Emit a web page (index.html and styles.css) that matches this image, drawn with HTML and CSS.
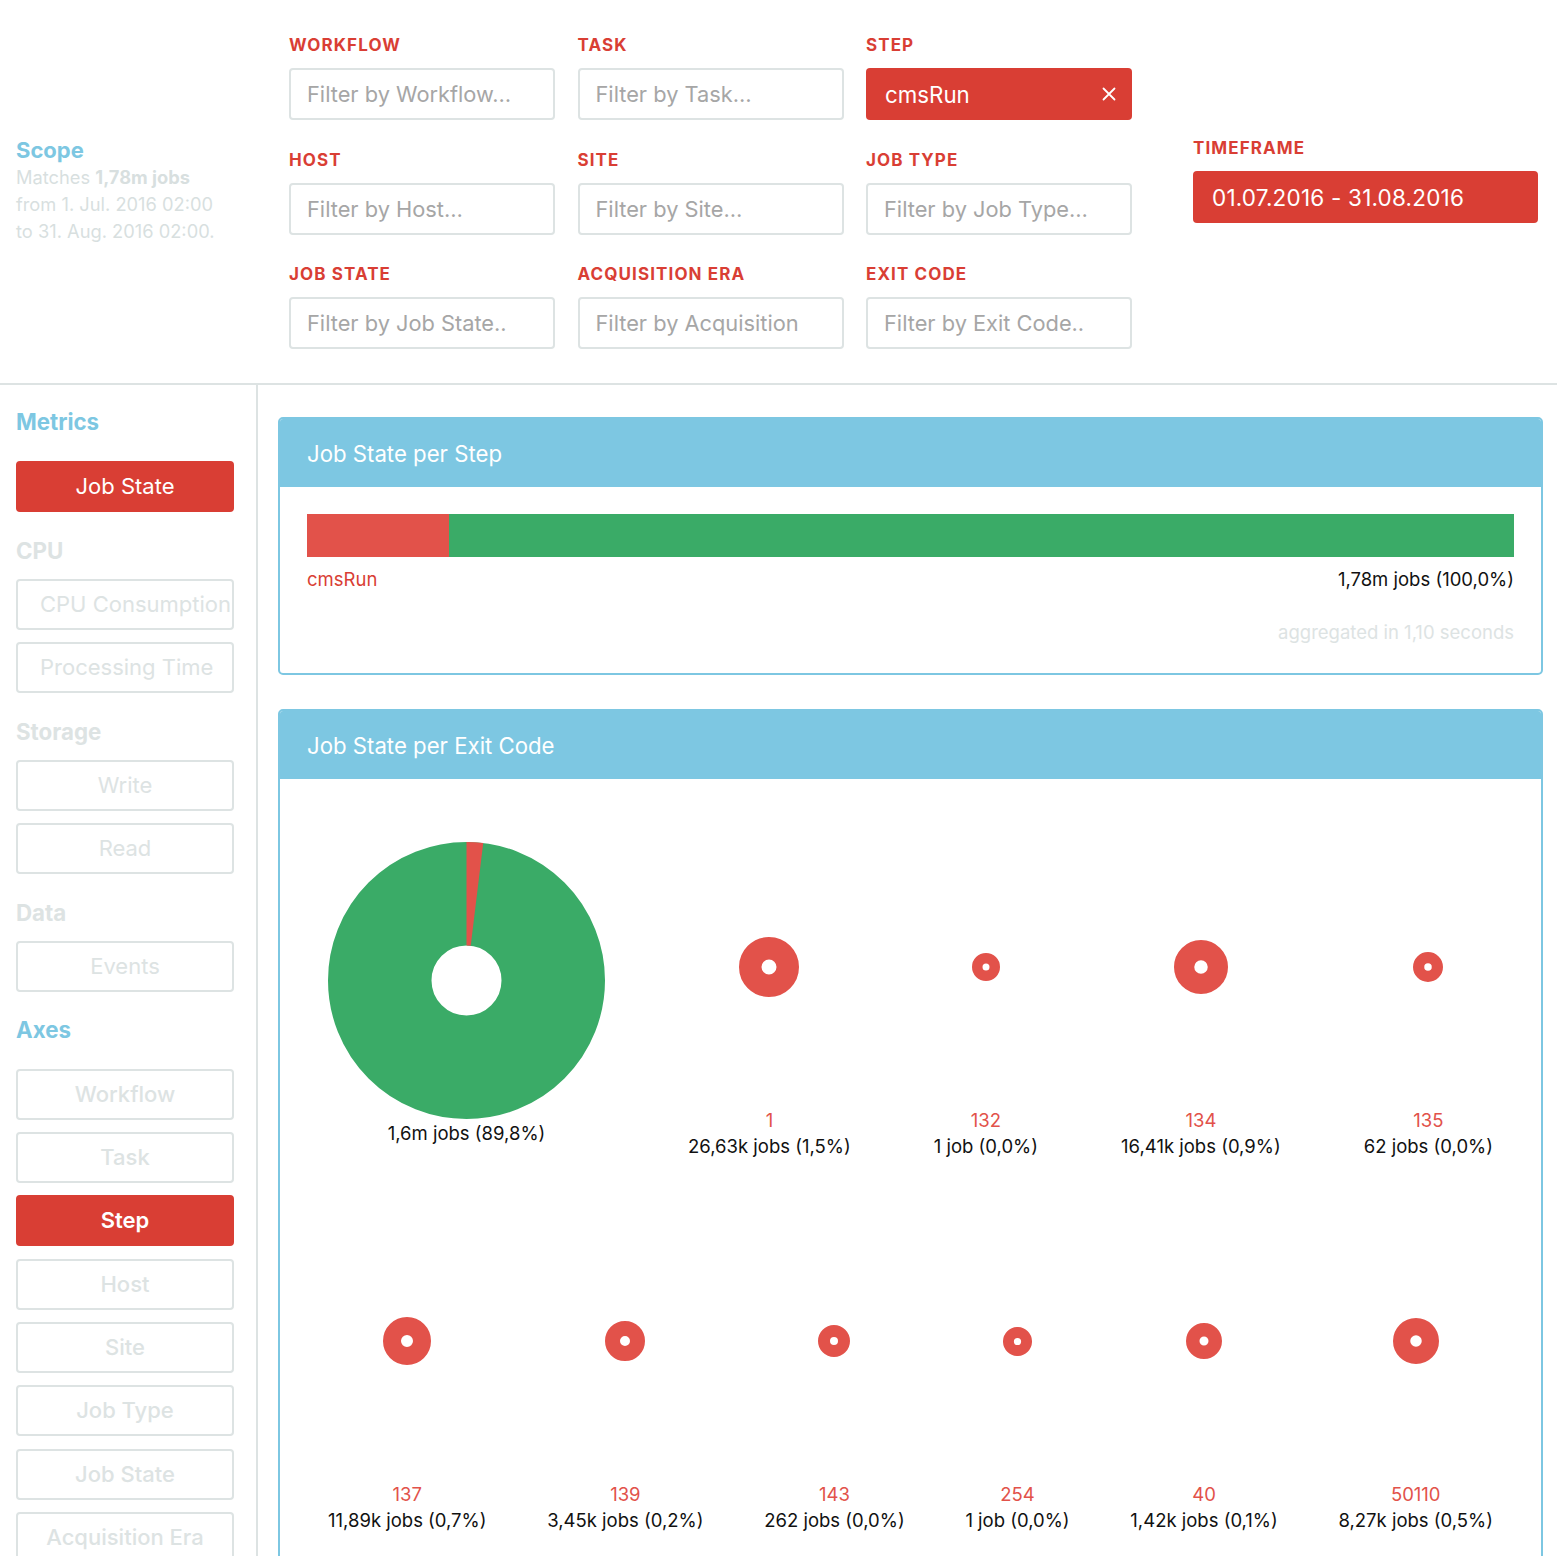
FILE: index.html
```html
<!DOCTYPE html>
<html lang="en">
<head>
<meta charset="utf-8">
<title>Job State</title>
<link rel="stylesheet" href="styles.css">
</head>
<body>
<header class="top">
  <div class="scope">
    <div class="scope-title">Scope</div>
    <div class="scope-text">Matches <b>1,78m jobs</b><br>from 1. Jul. 2016 02:00<br>to 31. Aug. 2016 02:00.</div>
  </div>
  <div class="filters">
    <div class="filter"><div class="flabel">WORKFLOW</div><input class="finput" placeholder="Filter by Workflow…"></div>
    <div class="filter"><div class="flabel">TASK</div><input class="finput" placeholder="Filter by Task…"></div>
    <div class="filter"><div class="flabel">STEP</div>
      <div class="fselected"><span>cmsRun</span>
        <svg class="x-icon" width="14" height="14" viewBox="0 0 14 14"><path d="M1.5 1.5L12.5 12.5M12.5 1.5L1.5 12.5" stroke="#fff" stroke-width="1.8" stroke-linecap="round"/></svg>
      </div>
    </div>
    <div class="filter"><div class="flabel">HOST</div><input class="finput" placeholder="Filter by Host…"></div>
    <div class="filter"><div class="flabel">SITE</div><input class="finput" placeholder="Filter by Site…"></div>
    <div class="filter"><div class="flabel">JOB TYPE</div><input class="finput" placeholder="Filter by Job Type…"></div>
    <div class="filter"><div class="flabel">JOB STATE</div><input class="finput" placeholder="Filter by Job State.."></div>
    <div class="filter"><div class="flabel">ACQUISITION ERA</div><input class="finput" placeholder="Filter by Acquisition Era…"></div>
    <div class="filter"><div class="flabel">EXIT CODE</div><input class="finput" placeholder="Filter by Exit Code.."></div>
  </div>
  <div class="timeframe">
    <div class="flabel">TIMEFRAME</div>
    <div class="tf-box">01.07.2016 - 31.08.2016</div>
  </div>
</header>

<div class="layout">
  <aside class="sidebar">
    <div class="sec-title">Metrics</div>
    <div class="btn active">Job State</div>
    <div class="grp-title">CPU</div>
    <div class="btn">CPU Consumption</div>
    <div class="btn">Processing Time</div>
    <div class="grp-title">Storage</div>
    <div class="btn">Write</div>
    <div class="btn">Read</div>
    <div class="grp-title">Data</div>
    <div class="btn">Events</div>
    <div class="sec-title">Axes</div>
    <div class="btn axis">Workflow</div>
    <div class="btn axis">Task</div>
    <div class="btn axis active">Step</div>
    <div class="btn axis">Host</div>
    <div class="btn axis">Site</div>
    <div class="btn axis">Job Type</div>
    <div class="btn axis">Job State</div>
    <div class="btn axis">Acquisition Era</div>
  </aside>

  <main class="main">
    <section class="panel">
      <div class="panel-head">Job State per Step</div>
      <div class="panel-body">
        <div class="bar">
          <div class="bar-red" style="width:142px"></div>
          <div class="bar-green"></div>
        </div>
        <div class="bar-labels"><span class="bar-name">cmsRun</span><span class="bar-count">1,78m jobs (100,0%)</span></div>
        <div class="agg">aggregated in 1,10 seconds</div>
      </div>
    </section>

    <section class="panel panel-2">
      <div class="panel-head">Job State per Exit Code</div>
      <div class="panel-body charts">
        <div class="chart-row">
          <div class="item">
            <div class="chart pie-chart">
              <svg width="277" height="277" viewBox="0 0 277 277">
                <circle cx="138.5" cy="138.5" r="86.75" fill="none" stroke="#3aab67" stroke-width="103.5"/>
                <circle cx="138.5" cy="138.5" r="86.75" fill="none" stroke="#e2524a" stroke-width="103.5" stroke-dasharray="10.6 600" transform="rotate(-90 138.5 138.5)"/>
              </svg>
            </div>
            <div class="count">1,6m jobs (89,8%)</div>
          </div>
          <div class="item">
            <div class="chart"><svg width="60" height="60" viewBox="0 0 60 60"><circle cx="30" cy="30" r="18.75" fill="none" stroke="#e2524a" stroke-width="22.5"/></svg></div>
            <div class="code">1</div><div class="count">26,63k jobs (1,5%)</div>
          </div>
          <div class="item">
            <div class="chart"><svg width="28" height="28" viewBox="0 0 28 28"><circle cx="14" cy="14" r="8.75" fill="none" stroke="#e2524a" stroke-width="10.5"/></svg></div>
            <div class="code">132</div><div class="count">1 job (0,0%)</div>
          </div>
          <div class="item">
            <div class="chart"><svg width="54" height="54" viewBox="0 0 54 54"><circle cx="27" cy="27" r="16.875" fill="none" stroke="#e2524a" stroke-width="20.25"/></svg></div>
            <div class="code">134</div><div class="count">16,41k jobs (0,9%)</div>
          </div>
          <div class="item">
            <div class="chart"><svg width="30" height="30" viewBox="0 0 30 30"><circle cx="15" cy="15" r="9.375" fill="none" stroke="#e2524a" stroke-width="11.25"/></svg></div>
            <div class="code">135</div><div class="count">62 jobs (0,0%)</div>
          </div>
        </div>
        <div class="chart-row">
          <div class="item">
            <div class="chart"><svg width="48" height="48" viewBox="0 0 48 48"><circle cx="24" cy="24" r="15" fill="none" stroke="#e2524a" stroke-width="18"/></svg></div>
            <div class="code">137</div><div class="count">11,89k jobs (0,7%)</div>
          </div>
          <div class="item">
            <div class="chart"><svg width="40" height="40" viewBox="0 0 40 40"><circle cx="20" cy="20" r="12.5" fill="none" stroke="#e2524a" stroke-width="15"/></svg></div>
            <div class="code">139</div><div class="count">3,45k jobs (0,2%)</div>
          </div>
          <div class="item">
            <div class="chart"><svg width="32" height="32" viewBox="0 0 32 32"><circle cx="16" cy="16" r="10" fill="none" stroke="#e2524a" stroke-width="12"/></svg></div>
            <div class="code">143</div><div class="count">262 jobs (0,0%)</div>
          </div>
          <div class="item">
            <div class="chart"><svg width="29" height="29" viewBox="0 0 29 29"><circle cx="14.5" cy="14.5" r="9.06" fill="none" stroke="#e2524a" stroke-width="10.9"/></svg></div>
            <div class="code">254</div><div class="count">1 job (0,0%)</div>
          </div>
          <div class="item">
            <div class="chart"><svg width="36" height="36" viewBox="0 0 36 36"><circle cx="18" cy="18" r="11.25" fill="none" stroke="#e2524a" stroke-width="13.5"/></svg></div>
            <div class="code">40</div><div class="count">1,42k jobs (0,1%)</div>
          </div>
          <div class="item">
            <div class="chart"><svg width="46" height="46" viewBox="0 0 46 46"><circle cx="23" cy="23" r="14.375" fill="none" stroke="#e2524a" stroke-width="17.25"/></svg></div>
            <div class="code">50110</div><div class="count">8,27k jobs (0,5%)</div>
          </div>
        </div>
      </div>
    </section>
  </main>
</div>
</body>
</html>
```

FILE: styles.css
```css
html, body {
  margin: 0;
  padding: 0;
  overflow: hidden;
  height: 1556px;
}
body {
  font-family: Inter, "Noto Sans", sans-serif;
  color: #111;
  background: #fff;
}

/* ---------- top filter bar ---------- */
.top {
  display: flex;
  align-items: flex-start;
  height: 385px;
  box-sizing: border-box;
  border-bottom: 2px solid #dde3e3;
  padding-top: 35px;
}
.scope {
  width: 289px;
  box-sizing: border-box;
  padding-left: 16px;
  margin-top: 102px;
  flex: none;
}
.scope-title {
  color: #7dc7e2;
  font-weight: 700;
  font-size: 22px;
  line-height: 26px;
}
.scope-text {
  color: #d8dfdf;
  font-size: 18.3px;
  line-height: 27px;
  margin-top: 1px;
  white-space: nowrap;
}
.scope-text b { font-weight: 700; }

.filters {
  display: grid;
  grid-template-columns: repeat(3, 266px);
  column-gap: 22.5px;
  row-gap: 29.5px;
  flex: none;
}
.flabel {
  color: #d93e34;
  font-weight: 700;
  font-size: 17px;
  letter-spacing: 1.1px;
  line-height: 20px;
  margin-bottom: 13px;
}
.finput {
  display: block;
  width: 100%;
  height: 52px;
  box-sizing: border-box;
  border: 2px solid #dde3e3;
  border-radius: 4px;
  padding: 0 43px 0 16px;
  font-family: inherit;
  font-size: 21.8px;
  color: #333;
  background: #fff;
  outline: none;
}
.finput::placeholder { color: #a6a6a6; opacity: 1; }
.fselected {
  display: flex;
  align-items: center;
  justify-content: space-between;
  height: 52px;
  box-sizing: border-box;
  background: #d93e34;
  border-radius: 4px;
  padding: 0 16px 0 19px;
  color: #fff;
  font-size: 22.3px;
}
.x-icon { display: block; }

.timeframe {
  margin-left: 61px;
  width: 345px;
  margin-top: 103px;
  flex: none;
}
.tf-box {
  height: 52px;
  box-sizing: border-box;
  background: #d93e34;
  border-radius: 4px;
  color: #fff;
  font-size: 22.5px;
  letter-spacing: 0.2px;
  display: flex;
  align-items: center;
  padding-left: 19px;
}

/* ---------- layout ---------- */
.layout {
  display: flex;
  align-items: stretch;
  height: 1171px;
}
.sidebar {
  flex: none;
  width: 258px;
  box-sizing: border-box;
  border-right: 2px solid #dde3e3;
  padding: 25px 0 0 16px;
  display: flex;
  flex-direction: column;
  align-items: flex-start;
}
.sec-title {
  color: #7dc7e2;
  font-weight: 700;
  font-size: 22.3px;
  line-height: 24px;
  margin: 14px 0 26.5px;
}
.sec-title:first-child { margin-top: 0; margin-bottom: 27px; }
.grp-title {
  color: #dde3e3;
  font-weight: 700;
  font-size: 22.3px;
  line-height: 24px;
  margin: 14.5px 0 16px;
}
.btn {
  flex: none;
  width: 218px;
  height: 51px;
  box-sizing: border-box;
  border: 2px solid #dde3e3;
  border-radius: 4px;
  color: #dde3e3;
  font-size: 22px;
  line-height: 47px;
  text-align: center;
  padding: 0 22px;
  margin-bottom: 12.3px;
  white-space: nowrap;
  overflow: hidden;
}
.btn.axis { font-weight: 500; }
.btn.active {
  background: #d93e34;
  border-color: #d93e34;
  color: #fff;
}
.btn.axis.active { font-weight: 600; }

.main {
  flex: 1;
  padding: 32px 14px 0 20px;
  min-width: 0;
}

/* ---------- panels ---------- */
.panel {
  border: 2px solid #7dc7e2;
  border-radius: 5px;
  overflow: hidden;
}
.panel-2 {
  margin-top: 34px;
}
.panel-head {
  background: #7dc7e2;
  color: #fff;
  font-size: 22.2px;
  height: 68px;
  display: flex;
  align-items: center;
  padding-left: 27px;
}
.panel-body {
  padding: 27px 27px 30px;
}
.bar {
  display: flex;
  height: 43px;
}
.bar-red { background: #e2524a; }
.bar-green { background: #3aab67; flex: 1; }
.bar-labels {
  display: flex;
  justify-content: space-between;
  font-size: 18.5px;
  line-height: 22px;
  margin-top: 11px;
}
.bar-name { color: #d93e34; }
.bar-count { color: #111; }
.agg {
  text-align: right;
  color: #dde3e3;
  font-size: 18.5px;
  line-height: 22px;
  margin-top: 31px;
}

.charts {
  padding: 48px 27px 60px;
}
.chart-row {
  display: flex;
  justify-content: space-between;
  align-items: center;
}
.chart-row + .chart-row { margin-top: 42px; }
.item {
  padding: 0 21px;
  display: flex;
  flex-direction: column;
  align-items: center;
  text-align: center;
}
.chart {
  height: 280px;
  display: flex;
  align-items: center;
  justify-content: center;
}
.chart svg { display: block; }
.code {
  color: #e2524a;
  font-size: 18.5px;
  line-height: 26px;
}
.count {
  color: #111;
  font-size: 18.5px;
  line-height: 26px;
  white-space: nowrap;
}
```
